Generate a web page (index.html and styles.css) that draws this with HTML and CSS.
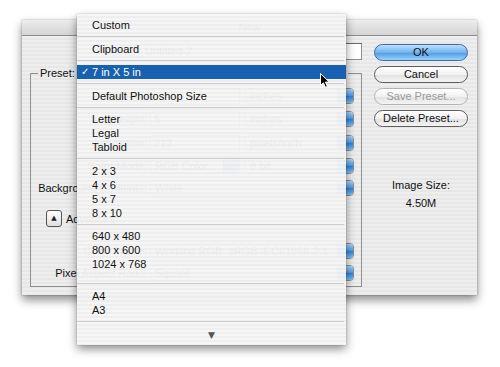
FILE: index.html
```html
<!DOCTYPE html>
<html lang="en">
<head>
    <meta charset="UTF-8">
    <title>New</title>
    <link rel="stylesheet" href="styles.css">
</head>
<body>
    <div class="screen">
        <div class="dialog">
            <div class="titlebar">New</div>
            <div class="dialog-body">
                <div class="left">
                    <div class="name-row">
                        <span class="name-label">Name:</span>
                        <span class="field name-field">Untitled-2</span>
                    </div>
                    <fieldset class="group">
                        <legend>
                            <span class="legend-label">Preset:</span>
                            <span class="popup preset"><span class="popup-text">7 in X 5 in</span></span>
                        </legend>
                        <div class="row first">
                            <span class="label">Width:</span>
                            <span class="field num">7</span>
                            <span class="popup unit"><span class="popup-text">inches</span><i class="cap"></i></span>
                        </div>
                        <div class="row">
                            <span class="label">Height:</span>
                            <span class="field num">5</span>
                            <span class="popup unit"><span class="popup-text">inches</span><i class="cap"></i></span>
                        </div>
                        <div class="row gap8">
                            <span class="label">Resolution:</span>
                            <span class="field num">212</span>
                            <span class="popup unit"><span class="popup-text">pixels/inch</span><i class="cap"></i></span>
                        </div>
                        <div class="row">
                            <span class="label">Color Mode:</span>
                            <span class="popup mode"><span class="popup-text">RGB Color</span><i class="cap"></i></span>
                            <span class="popup unit"><span class="popup-text">8 bit</span><i class="cap"></i></span>
                        </div>
                        <div class="row gap6">
                            <span class="label">Background Contents:</span>
                            <span class="popup long"><span class="popup-text">White</span><i class="cap"></i></span>
                        </div>
                        <div class="row adv">
                            <span class="disclose">&#9650;</span>
                            <span class="adv-label">Advanced</span>
                        </div>
                        <div class="row gap16">
                            <span class="label">Color Profile:</span>
                            <span class="popup long"><span class="popup-text">Working RGB: sRGB IEC61966-2.1</span><i class="cap"></i></span>
                        </div>
                        <div class="row gap6">
                            <span class="label">Pixel Aspect Ratio:</span>
                            <span class="popup long"><span class="popup-text">Square</span><i class="cap"></i></span>
                        </div>
                    </fieldset>
                </div>
                <div class="right">
                    <button class="aqua default">OK</button>
                    <button class="aqua">Cancel</button>
                    <button class="aqua disabled">Save Preset...</button>
                    <button class="aqua">Delete Preset...</button>
                    <div class="image-size">
                        <div>Image Size:</div>
                        <div class="size-value">4.50M</div>
                    </div>
                </div>
            </div>
        </div>

        <div class="menu">
            <div class="item">Custom</div>
            <div class="sep"></div>
            <div class="item">Clipboard</div>
            <div class="sep"></div>
            <div class="item on"><span class="check">&#10003;</span>7 in X 5 in</div>
            <div class="sep"></div>
            <div class="item">Default Photoshop Size</div>
            <div class="sep"></div>
            <div class="item">Letter</div>
            <div class="item">Legal</div>
            <div class="item">Tabloid</div>
            <div class="sep"></div>
            <div class="item">2 x 3</div>
            <div class="item">4 x 6</div>
            <div class="item">5 x 7</div>
            <div class="item">8 x 10</div>
            <div class="sep"></div>
            <div class="item">640 x 480</div>
            <div class="item">800 x 600</div>
            <div class="item">1024 x 768</div>
            <div class="sep tall"></div>
            <div class="item">A4</div>
            <div class="item">A3</div>
            <div class="sep"></div>
            <div class="more">&#9660;</div>
        </div>

        <svg class="cursor" width="11" height="16" viewBox="0 0 11 16">
            <path d="M0.5 0.5 V12.5 L3.4 9.8 L5.4 14.3 L7.4 13.4 L5.4 9.1 H9.3 Z" fill="#000" stroke="#fff" stroke-width="1"/>
        </svg>
    </div>
</body>
</html>
```

FILE: styles.css
```css
body {
    margin: 0;
    background: #fff;
    font-family: "Liberation Sans", Arial, sans-serif;
    font-size: 11px;
    color: #111;
}
.screen {
    position: relative;
    width: 500px;
    height: 367px;
    overflow: hidden;
    padding: 20px 0 0 22px;
    box-sizing: border-box;
}

/* dialog behind the menu */
.dialog {
    width: 455px;
    height: 275px;
    background: repeating-linear-gradient(#eeeeee 0 2px, #e7e7e7 2px 4px);
    box-shadow: 0 5px 9px rgba(0,0,0,0.45), 0 0 2px rgba(0,0,0,0.3);
}
.titlebar {
    height: 15px;
    line-height: 15px;
    text-align: center;
    color: #222;
    background: linear-gradient(#ededed, #d4d4d4);
    border-bottom: 1px solid #8c8c8c;
}
.dialog-body {
    display: flex;
    padding: 7px 9px 0 8px;
}
.left {
    width: 332px;
}
.name-row {
    display: flex;
    justify-content: flex-end;
    align-items: center;
    gap: 5px;
    height: 17px;
}
.field {
    display: inline-block;
    box-sizing: border-box;
    height: 16px;
    line-height: 14px;
    padding: 0 3px;
    background: #fff;
    border: 1px solid #8e8e8e;
    border-top-color: #6a6a6a;
}
.name-field {
    width: 221px;
    height: 17px;
}
.group {
    margin: 5px 0 0;
    padding: 7px 0 5px;
    border: 1px solid #8e8e8e;
    min-width: 0;
}
.group legend {
    margin-left: 7px;
    padding: 0 2px;
    height: 16px;
    line-height: 16px;
}
.legend-label {
    margin-right: 4px;
}
.popup {
    display: inline-flex;
    box-sizing: border-box;
    height: 16px;
    line-height: 14px;
    vertical-align: top;
    background: linear-gradient(#ffffff, #eaeaea);
    border: 1px solid #8e8e8e;
    border-radius: 4px;
    overflow: hidden;
}
.popup-text {
    flex: 1;
    padding-left: 4px;
    white-space: nowrap;
    overflow: hidden;
}
.preset {
    width: 264px;
}
.cap {
    flex: none;
    width: 15px;
    background: linear-gradient(#a9d3f7, #4b98e2 50%, #2f7fd6 51%, #7fc0f5);
    border-left: 1px solid #3a6fae;
}
.row {
    display: flex;
    align-items: center;
    height: 16px;
    margin-top: 7px;
}
.row.first {
    margin-top: 0;
}
.row.gap8 {
    margin-top: 8px;
}
.row.gap6 {
    margin-top: 6px;
}
.row.gap16 {
    margin-top: 16px;
}
.row.adv {
    margin-top: 14px;
    height: 17px;
}
.label {
    flex: none;
    width: 116px;
    margin-right: 3px;
    text-align: right;
    white-space: nowrap;
}
.num {
    width: 90px;
    margin-right: 5px;
}
.mode {
    width: 90px;
    margin-right: 5px;
}
.unit {
    width: 109px;
}
.long {
    width: 204px;
}
.disclose {
    box-sizing: border-box;
    width: 16px;
    height: 17px;
    margin-left: 15px;
    margin-right: 4px;
    border: 1px solid #555;
    border-radius: 3px;
    background: linear-gradient(#ffffff, #dedede);
    font-size: 7px;
    line-height: 15px;
    text-align: center;
    color: #222;
    font-family: "DejaVu Sans", sans-serif;
}

/* right column */
.right {
    margin-left: 12px;
    width: 94px;
    display: flex;
    flex-direction: column;
    gap: 5px;
    padding-top: 1px;
}
.aqua {
    box-sizing: border-box;
    height: 17px;
    padding: 0;
    font-family: inherit;
    font-size: 11px;
    line-height: 15px;
    color: #111;
    background: linear-gradient(#ffffff, #f1f1f1 50%, #e1e1e1 51%, #f4f4f4);
    border: 1px solid #5c5c5c;
    border-radius: 9px;
}
.aqua.default {
    background: linear-gradient(#bfe0fb, #6fb2ee 50%, #4c9be6 51%, #9cd2fa);
    border-color: #3b6aa6;
}
.aqua.disabled {
    color: #9a9a9a;
    border-color: #b4b4b4;
}
.image-size {
    margin-top: 44px;
    text-align: center;
    line-height: 18px;
}

/* popup menu over the dialog */
.menu {
    position: absolute;
    left: 77px;
    top: 14px;
    width: 269px;
    height: 331px;
    box-sizing: border-box;
    padding-top: 4px;
    background: repeating-linear-gradient(rgba(246,246,246,0.96) 0 2px, rgba(238,238,238,0.96) 2px 4px);
    box-shadow: 0 4px 9px rgba(0,0,0,0.45), 0 0 1px rgba(0,0,0,0.35);
}
.item {
    position: relative;
    height: 14px;
    line-height: 14px;
    padding-left: 15px;
    white-space: nowrap;
}
.item.on {
    background: #1761b0;
    color: #fff;
}
.check {
    position: absolute;
    left: 4px;
    top: 0;
    font-family: "DejaVu Sans", sans-serif;
    font-size: 10px;
    font-weight: bold;
}
.sep {
    position: relative;
    height: 9.5px;
}
.sep::after {
    content: "";
    position: absolute;
    left: 0;
    right: 2px;
    top: 4px;
    height: 1px;
    background: #cdcdcd;
}
.sep.tall {
    height: 18px;
}
.sep.tall::after {
    top: 12px;
}
.more {
    text-align: center;
    line-height: 17px;
    font-family: "DejaVu Sans", sans-serif;
    font-size: 9px;
    color: #555;
}
.cursor {
    position: absolute;
    left: 320px;
    top: 73px;
}
```
